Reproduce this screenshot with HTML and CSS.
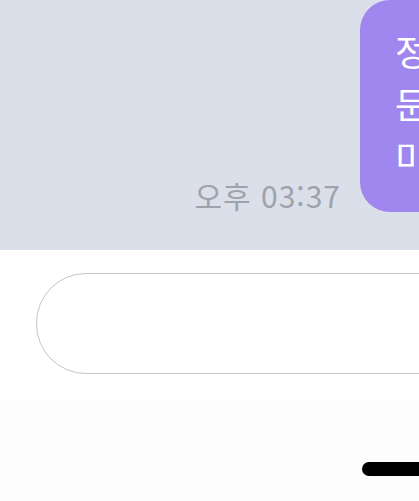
FILE: index.html
```html
<!DOCTYPE html>
<html lang="ko">
<head>
    <meta charset="UTF-8">
    <meta name="viewport" content="width=device-width, initial-scale=1.0">
    <title>채팅</title>
    <link rel="stylesheet" href="styles.css">
</head>
<body>
    <div class="chat">
        <div class="meta">
            <span class="time">오후 03:37</span>
        </div>
        <div class="bubble">
            정말 맛있게 드셨다니 다행이에요<br>
            문의하신 내용은 확인 후<br>
            미리 안내해 드릴게요
        </div>
    </div>

    <div class="composer">
        <div class="input-box"></div>
    </div>

    <div class="footer">
        <div class="home-bar"></div>
    </div>
</body>
</html>
```

FILE: styles.css
```css
:root {
    --chat-bg: #dbdfe9;
    --bubble-bg: #a087ef;
    --time-color: #9ea2ac;
    --border-color: #c4c4c4;
    --footer-bg: #fdfdfd;
}

* {
    margin: 0;
    padding: 0;
    box-sizing: border-box;
    font-family: "Noto Sans CJK KR", "Noto Sans", sans-serif;
}

html, body {
    width: 419px;
    height: 501px;
    overflow: hidden;
    background-color: #ffffff;
}

.chat {
    height: 250px;
    background-color: var(--chat-bg);
    display: flex;
    align-items: flex-end;
    padding-bottom: 38px;
    overflow: hidden;
}

.meta {
    flex: 0 0 360px;
    display: flex;
    justify-content: flex-end;
    padding-right: 19px;
}

.time {
    font-size: 30px;
    line-height: 34px;
    color: var(--time-color);
    letter-spacing: 1px;
}

.bubble {
    flex: 0 0 auto;
    width: 600px;
    height: 212px;
    padding: 24px 0 0 35px;
    background-color: var(--bubble-bg);
    border-radius: 30px;
    color: #ffffff;
    font-size: 36px;
    line-height: 53px;
    white-space: nowrap;
}

.composer {
    height: 150px;
    padding: 23px 0 0 36px;
    overflow: hidden;
}

.input-box {
    width: 440px;
    height: 101px;
    border: 1px solid var(--border-color);
    border-radius: 50px;
    background-color: #ffffff;
}

.footer {
    height: 101px;
    background-color: var(--footer-bg);
    padding: 62px 0 0 362px;
    overflow: hidden;
}

.home-bar {
    width: 120px;
    height: 14px;
    border-radius: 7px;
    background-color: #000000;
}
```
